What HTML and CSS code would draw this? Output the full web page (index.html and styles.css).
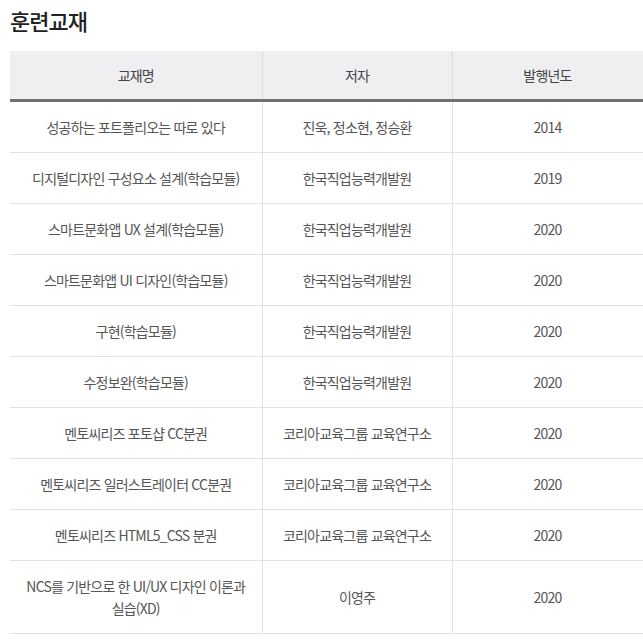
FILE: index.html
```html
<!DOCTYPE html>
<html lang="ko">
<head>
<meta charset="utf-8">
<link rel="stylesheet" href="styles.css">
</head>
<body>
<div class="wrap">
  <h2 class="title">훈련교재</h2>
  <table class="books">
    <colgroup>
      <col class="c1"><col class="c2"><col class="c3">
    </colgroup>
    <thead>
      <tr><th>교재명</th><th>저자</th><th>발행년도</th></tr>
    </thead>
    <tbody>
      <tr><td>성공하는 포트폴리오는 따로 있다</td><td>진욱, 정소현, 정승환</td><td>2014</td></tr>
      <tr><td>디지털디자인 구성요소 설계(학습모듈)</td><td>한국직업능력개발원</td><td>2019</td></tr>
      <tr><td>스마트문화앱 UX 설계(학습모듈)</td><td>한국직업능력개발원</td><td>2020</td></tr>
      <tr><td>스마트문화앱 UI 디자인(학습모듈)</td><td>한국직업능력개발원</td><td>2020</td></tr>
      <tr><td>구현(학습모듈)</td><td>한국직업능력개발원</td><td>2020</td></tr>
      <tr><td>수정보완(학습모듈)</td><td>한국직업능력개발원</td><td>2020</td></tr>
      <tr><td>멘토씨리즈 포토샵 CC분권</td><td>코리아교육그룹 교육연구소</td><td>2020</td></tr>
      <tr><td>멘토씨리즈 일러스트레이터 CC분권</td><td>코리아교육그룹 교육연구소</td><td>2020</td></tr>
      <tr><td>멘토씨리즈 HTML5_CSS 분권</td><td>코리아교육그룹 교육연구소</td><td>2020</td></tr>
      <tr><td>NCS를 기반으로 한 UI/UX 디자인 이론과<br>실습(XD)</td><td>이영주</td><td>2020</td></tr>
    </tbody>
  </table>
</div>
</body>
</html>
```
FILE: styles.css
```css
html, body {
  margin: 0;
  padding: 0;
  background: #fff;
}
body {
  font-family: "Noto Sans CJK KR", "Noto Sans", sans-serif;
}
.wrap {
  padding: 5px 0 0 10px;
  width: 633px;
}
.title {
  margin: 0 0 16px 0;
  font-size: 22px;
  line-height: 30px;
  font-weight: 500;
  letter-spacing: -1px;
  color: #222;
}
.books {
  width: 633px;
  border-collapse: collapse;
  table-layout: fixed;
}
.c1 { width: 252px; }
.c2 { width: 190px; }
.c3 { width: 191px; }
.books th,
.books td {
  text-align: center;
  font-size: 14px;
  letter-spacing: -0.8px;
  color: #555;
  padding: 0;
}
.books th {
  height: 48px;
  background: #efeff1;
  font-weight: 400;
  color: #444;
  border-left: 1px solid #dcdcdc;
  border-bottom: 3px solid #707070;
}
.books td {
  padding: 14px 10px;
  line-height: 22px;
  border-left: 1px solid #e2e2e2;
  border-bottom: 1px solid #e2e2e2;
}
.books th:first-child,
.books td:first-child {
  border-left: none;
}
.books th:last-child,
.books td:last-child {
  border-right: 1px solid #e2e2e2;
}
```
